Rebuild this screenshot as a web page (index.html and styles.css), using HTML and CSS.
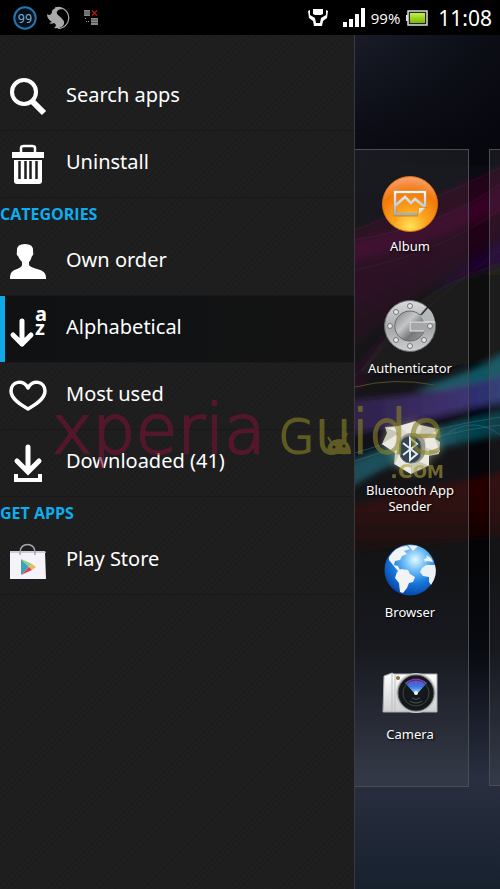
FILE: index.html
```html
<!DOCTYPE html>
<html lang="en">
<head>
  <meta charset="UTF-8">
  <meta name="viewport" content="width=device-width, initial-scale=1.0">
  <title>App drawer</title>
  <link rel="stylesheet" href="styles.css">
</head>
<body>
  <header class="status-bar">
    <div class="status-left">
      <svg width="24" height="24" viewBox="0 0 24 24">
        <circle cx="12" cy="12" r="10.700" fill="#05101a" stroke="#2474b0" stroke-width="2"/>
        <text class="badge-number" x="12" y="17" text-anchor="middle">99</text>
      </svg>
      <svg width="24" height="24" viewBox="0 0 24 24">
        <path d="M9 2A10.500 10.500 0 1 1 12 22.500" fill="none" stroke="#aaa" stroke-width="1.200"/>
        <path d="M1 8C3 10 6 9 6 5C8 1.500 13 .500 17 3C12 3 9 6 12 9C15 12 19 14 18 18C17 21 13 23 8 22C11 20 10 18 8 17C6 18 5 18 3 17L6 16C3 14 1 12 1 8Z" fill="#aaa"/>
      </svg>
      <svg width="24" height="24" viewBox="0 0 24 24">
        <path d="M5 4h6v6H5zM12 12h7v7h-7z" fill="#888"/>
        <path d="M5 6h6M5 8h6M12 14h7M12 16.500h7" stroke="#333" stroke-width=".6"/>
        <path d="M13 4.500l5 5M18 4.500l-5 5" stroke="#c01010" stroke-width="1.300"/>
        <path d="M6 12h1v1H6zM7 15h1v1H7zM9 15h1v1H9z" fill="#aaa"/>
      </svg>
    </div>
    <div class="status-right">
      <svg class="debug" width="20" height="18" viewBox="0 0 20 18">
        <path d="M5 0h10v5l-2 1H7L5 5z" fill="#fff"/>
        <path d="M0 2l2-1v5l5 3 1 5h4l1-5 5-3V1l2 1-1 7-4 3-1 5H6l-1-5-4-3z" fill="#fff"/>
      </svg>
      <svg class="signal" width="22" height="19" viewBox="0 0 22 19">
        <path d="M0 14h4v5H0zM6 11h4v8H6zM12 6h4v13h-4zM18 0h4v19h-4z" fill="#fff"/>
      </svg>
      <span class="percent">99%</span>
      <svg class="battery" width="22" height="16" viewBox="0 0 22 16">
        <defs>
          <linearGradient id="charge" x2="0" y2="1">
            <stop stop-color="#c5ef48"/><stop offset="1" stop-color="#77b900"/>
          </linearGradient>
        </defs>
        <rect x="2" y="1" width="19" height="14" fill="#222" stroke="#ddd" stroke-width="1.500"/>
        <path d="M0 5h2v6H0z" fill="#ddd"/>
        <rect x="4" y="3" width="15" height="10" fill="url(#charge)"/>
      </svg>
      <time class="clock">11:08</time>
    </div>
  </header>

  <main class="screen">
    <nav class="drawer">
      <button class="item">
        <svg width="38" height="38" viewBox="0 0 38 38">
          <circle cx="15" cy="14" r="12" fill="none" stroke="#fff" stroke-width="4"/>
          <path d="M23 23l12 12" stroke="#fff" stroke-width="6"/>
        </svg>
        <span>Search apps</span>
      </button>
      <button class="item">
        <svg width="38" height="40" viewBox="0 0 38 40">
          <path d="M12 8V4q0-2 3-2h8q3 0 3 2v4" fill="none" stroke="#fff" stroke-width="2.500"/>
          <path d="M3 8h32v6H3z" fill="#fff"/>
          <path d="M5 16h28v21q0 3-3 3H8q-3 0-3-3z" fill="#fff"/>
          <path d="M10.500 17v18M16.500 17v18M21.500 17v18M27.500 17v18" stroke="#1e1e1e" stroke-width="2.500"/>
        </svg>
        <span>Uninstall</span>
      </button>

      <h2 class="group">CATEGORIES</h2>
      <button class="item">
        <svg width="38" height="38" viewBox="0 0 38 38">
          <path d="M1 36V34Q1 28 8 26Q13 24 13 22V19Q10 16 9 13Q7 12 8 9Q7 1 16 1Q25 1 24 9Q25 12 23 13Q22 17 20 19V22Q21 24 28 26Q37 28 37 34V36Z" fill="#fff"/>
        </svg>
        <span>Own order</span>
      </button>
      <button class="item selected">
        <svg width="38" height="38" viewBox="0 0 38 38">
          <path d="M13 11v23M4 25l9 9 9-9" fill="none" stroke="#fff" stroke-width="5" stroke-linecap="round" stroke-linejoin="round"/>
          <text class="az" x="26" y="11">a</text>
          <text class="az" x="26" y="25">z</text>
        </svg>
        <span>Alphabetical</span>
      </button>
      <button class="item">
        <svg width="38" height="38" viewBox="0 0 38 38">
          <path d="M19 11C15 2 2 4 2 14C2 22 12 28 19 32C26 28 36 22 36 14C36 4 23 2 19 11Z" fill="none" stroke="#fff" stroke-width="3.500" stroke-linejoin="round"/>
        </svg>
        <span>Most used</span>
      </button>
      <button class="item">
        <svg width="38" height="40" viewBox="0 0 38 40">
          <path d="M19 4v23M8 18l11 11 11-11" fill="none" stroke="#fff" stroke-width="5" stroke-linecap="round"/>
          <path d="M7 31v6h24v-6" fill="none" stroke="#fff" stroke-width="4"/>
        </svg>
        <span>Downloaded (41)</span>
      </button>

      <h2 class="group">GET APPS</h2>
      <button class="item">
        <svg width="38" height="38" viewBox="0 0 38 38">
          <path d="M1 10h35l1 27H1z" fill="#f5f4fa"/>
          <path d="M1 9h35l1 2H1z" fill="#cfcdd6"/>
          <path d="M11 13V10C11 0 26 0 26 10v3" fill="none" stroke="#a5a5ad" stroke-width="1.500"/>
          <path d="M12 17v16l8-8z" fill="#3ba2bd"/>
          <path d="M12 17l8 8 3-3z" fill="#93c886"/>
          <path d="M23 22l-3 3 3 3 4-3z" fill="#f2b755"/>
          <path d="M12 33l8-8 3 3z" fill="#de4058"/>
        </svg>
        <span>Play Store</span>
      </button>
    </nav>

    <section class="home">
      <svg class="wallpaper" viewBox="0 0 146 854" preserveAspectRatio="none">
        <defs>
          <linearGradient id="sky" x2="0" y2="1">
            <stop stop-color="#191c28"/><stop offset=".12" stop-color="#0b0c14"/>
            <stop offset=".3" stop-color="#06060b"/><stop offset=".62" stop-color="#040407"/>
            <stop offset=".72" stop-color="#080a11"/><stop offset=".87" stop-color="#292f40"/>
            <stop offset="1" stop-color="#17212e"/>
          </linearGradient>
          <linearGradient id="shade" x2="1" y2="0">
            <stop stop-color="#05060c" stop-opacity="0"/><stop offset="1" stop-color="#05060c" stop-opacity=".7"/>
          </linearGradient>
          <linearGradient id="pink" x1=".3" y1="0" x2=".7" y2="1">
            <stop offset=".15" stop-color="#33041f" stop-opacity=".6"/><stop offset=".5" stop-color="#26041a" stop-opacity=".8"/><stop offset=".9" stop-color="#1b0413" stop-opacity=".2"/>
          </linearGradient>
          <linearGradient id="purple" x1="0" y1="1" x2="1" y2="0">
            <stop stop-color="#200616"/><stop offset=".5" stop-color="#1c0724"/><stop offset="1" stop-color="#1d0333"/>
          </linearGradient>
          <linearGradient id="olive" x2="0" y2="1">
            <stop stop-color="#13130a"/><stop offset="1" stop-color="#060607"/>
          </linearGradient>
          <linearGradient id="violet" x2="1" y2="0">
            <stop stop-color="#22133c"/><stop offset=".6" stop-color="#33236a"/><stop offset="1" stop-color="#293b7a"/>
          </linearGradient>
          <linearGradient id="teal" x2="1" y2="0">
            <stop stop-color="#0f4654"/><stop offset=".6" stop-color="#07505c"/><stop offset="1" stop-color="#05303c"/>
          </linearGradient>
          <linearGradient id="red" x2="0" y2="1">
            <stop stop-color="#2c0004"/><stop offset=".5" stop-color="#200204"/><stop offset="1" stop-color="#0b0204"/>
          </linearGradient>
          <filter id="soft" x="-10%" y="-10%" width="120%" height="120%">
            <feGaussianBlur stdDeviation="3"/>
          </filter>
        </defs>
        <rect width="146" height="854" fill="url(#sky)"/>
        <rect width="146" height="130" fill="url(#shade)"/>
        <g filter="url(#soft)">
          <path d="M-10 200Q80 160 156 128V205Q80 240 -10 320Z" fill="url(#pink)"/>
          <path d="M-10 208Q90 190 156 145V172Q80 208 -10 228Z" fill="#4c0630" opacity=".5"/>
          <path d="M-10 345Q66 255 156 200V232Q90 280 -10 365Z" fill="url(#purple)"/>
          <path d="M60 270Q100 240 156 228V320Q90 335 0 345Z" fill="url(#olive)"/>
          <path d="M80 348Q120 336 156 316V345Q110 355 60 356Z" fill="#0c5763"/>
          <path d="M-10 365Q90 360 156 338V366Q60 380 -10 418Z" fill="url(#violet)"/>
          <path d="M-10 400Q60 385 156 367V382Q80 395 -10 430Z" fill="#06060b"/>
          <path d="M-10 430Q90 390 156 374V400Q60 410 -10 456Z" fill="url(#teal)"/>
          <path d="M-10 472Q80 450 156 436V500Q80 508 -10 518Z" fill="url(#red)"/>
        </g>
        <path d="M0 352Q40 342 80 350" fill="none" stroke="#4d4420"/>
        <path d="M0 418Q80 392 146 382M0 426Q80 398 146 390M90 400Q120 380 146 400" fill="none" stroke="#22818c" opacity=".5"/>
        <path d="M0 205Q90 190 146 149M0 235Q90 216 146 174M0 341Q70 270 146 215M0 195Q80 165 146 133" fill="none" stroke="#63214b" opacity=".25"/>
      </svg>

      <div class="page">
        <button class="app">
          <svg width="56" height="56" viewBox="0 0 56 56">
            <defs>
              <radialGradient id="orange" cx=".5" cy=".9" r=".85">
                <stop stop-color="#ffe258"/><stop offset=".35" stop-color="#fba51e"/><stop offset=".75" stop-color="#f47808"/><stop offset="1" stop-color="#f69b63"/>
              </radialGradient>
              <linearGradient id="silver" x2="0" y2="1">
                <stop stop-color="#f4f8fa"/><stop offset="1" stop-color="#a2b0b8"/>
              </linearGradient>
            </defs>
            <circle cx="28" cy="28" r="27.500" fill="url(#orange)" stroke="#dc730c"/>
            <path d="M36 39H13V16h30v16" fill="none" stroke="#9c4600" stroke-width="3" opacity=".4"/>
            <path d="M35 38H13V16h30v15M13 30l10-9 6 6 4-4 10 8" fill="none" stroke="url(#silver)" stroke-width="2.500"/>
            <path d="M37 32h6l-6 6z" fill="#d8e2e6"/>
          </svg>
          <span>Album</span>
        </button>
        <button class="app">
          <svg width="56" height="56" viewBox="0 0 56 56">
            <defs>
              <linearGradient id="steel" x2="1" y2="1">
                <stop stop-color="#77797b"/><stop offset=".4" stop-color="#c4c6c7"/><stop offset=".65" stop-color="#75787a"/><stop offset="1" stop-color="#a5a6a7"/>
              </linearGradient>
              <linearGradient id="metal" x2="0" y2="1">
                <stop stop-color="#d9dadb"/><stop offset=".55" stop-color="#a4a7a9"/><stop offset="1" stop-color="#cecfd0"/>
              </linearGradient>
            </defs>
            <circle cx="28" cy="28" r="16" fill="url(#steel)"/>
            <path d="M45 9A25.500 25.500 0 1 0 53.500 28V24H28V33H42A15 15 0 1 1 38 17Z" fill="url(#metal)" stroke="#66696b"/>
            <path d="M28 24h25v9H28z" fill="#a5a8aa"/>
            <path d="M39 18l7-8q6 5 7 14H42z" fill="#b5b8ba"/>
            <path d="M28 33V24h25M28 33h14" fill="none" stroke="#efefef"/>
            <g fill="#e4e5e6" stroke="#777" stroke-width="1">
              <circle cx="28" cy="8" r="2.500"/><circle cx="14" cy="14" r="2.500"/><circle cx="8" cy="28" r="2.500"/><circle cx="14" cy="42" r="2.500"/><circle cx="28" cy="48" r="2.500"/><circle cx="42" cy="42" r="2.500"/><circle cx="48" cy="28" r="2.500"/>
            </g>
          </svg>
          <span>Authenticator</span>
        </button>
        <button class="app">
          <svg class="package" width="60" height="56" viewBox="0 0 60 56">
            <path d="M7 13L5 7l14-1L35 1l6 4 17 4-4 9 6 4-1 12-11 2v10L31 54 14 44l1-11L2 24z" fill="#c9c7b6"/>
            <path d="M7 8l22 9L34 2l-15 4zM2 24l14-9 9 6-9 12zM31 54l-16-10 4-10 12 4zM45 19l14-10-4 10 5 13-14-4zM36 40l13-11v17z" fill="#eceae0"/>
            <path d="M19 6l12 10 4-14 7 5-5 14-20 3z" fill="#dddbcf"/>
            <rect x="19" y="13" width="26" height="30" rx="12" fill="#999985"/>
            <rect x="20" y="16" width="21" height="27" rx="10" fill="#314454" stroke="#657375"/>
            <path d="M23 23l14 11-7 6V18l7 6-14 11" fill="none" stroke="#e6eced" stroke-width="2"/>
          </svg>
          <span>Bluetooth App Sender</span>
        </button>
        <button class="app">
          <svg width="56" height="56" viewBox="0 0 56 56">
            <defs>
              <radialGradient id="sea" cx=".6" cy=".3" r=".7">
                <stop stop-color="#e3fbff"/><stop offset=".3" stop-color="#72bff8"/><stop offset=".65" stop-color="#1879dc"/><stop offset="1" stop-color="#0749ad"/>
              </radialGradient>
            </defs>
            <circle cx="28" cy="28" r="25.500" fill="url(#sea)"/>
            <path d="M7 15Q14 4 25 4l3 3-6 2 3 3-5 2-2 4-5 1-1 4 4 1 2 4 4 1-1 2-5-2-5-6-4-5z" fill="#f2f3f4"/>
            <path d="M15 30l4-3 7 1 2 4 5 3-2 5-4 1-2 5-4 5-3-1-1-9-4-5z" fill="#f2f3f4"/>
            <path d="M53 23l-9 0-4 3-2 4 3 4 6 1v5l2 3Q56 33 53 23zM26 3l10 1-5 5zM44 13l5 3 2 4-6-1-2 1-1-3 3-1z" fill="#edf1f4"/>
          </svg>
          <span>Browser</span>
        </button>
        <button class="app">
          <svg width="56" height="56" viewBox="0 0 56 56">
            <defs>
              <linearGradient id="case" x2="0" y2="1">
                <stop stop-color="#fff"/><stop offset="1" stop-color="#cfd0d2"/>
              </linearGradient>
              <linearGradient id="glass" x2="0" y2="1">
                <stop stop-color="#8c2fc4"/><stop offset=".5" stop-color="#317ce0"/><stop offset="1" stop-color="#bfe6fc"/>
              </linearGradient>
            </defs>
            <path d="M2 12l8-3 2 1h43v38H1z" fill="url(#case)" stroke="#aaa"/>
            <path d="M10 10v38M13 11v37" stroke="#bcbdc0" stroke-width="1"/>
            <circle cx="16" cy="14" r="2" fill="#8c7337"/>
            <circle cx="34" cy="29" r="20" fill="#c7c8c9"/>
            <circle cx="34" cy="29" r="18" fill="#15181b" stroke="#666" stroke-width="1"/>
            <path d="M23 19Q34 10 45 19L34 31z" fill="url(#glass)"/>
            <circle cx="34" cy="29" r="13" fill="none" stroke="#3b4248"/>
            <path d="M30 34q4 3 8 0M28 37q6 4 12 0" fill="none" stroke="#42565c"/>
            <circle cx="34" cy="29" r="2" fill="#e5f6fb"/>
          </svg>
          <span>Camera</span>
        </button>
      </div>
      <div class="page next"></div>
    </section>

    <div class="watermark">
      <div class="brand">
        <span class="brand-first">xperia</span>
        <span class="brand-second"><span class="brand-cap">G</span>uide</span>
      </div>
      <div class="domain">.C<small>OM</small></div>
      <svg class="robot" width="26" height="26" viewBox="0 0 26 26">
        <path d="M1 24Q0 10 13 9Q25 10 25 24Z" fill="#8a8424"/>
        <path d="M5 12L2 7M18 10l3-7" stroke="#8a8424" stroke-width="2"/>
        <circle cx="8" cy="17" r="1.500" fill="#1e1e1e"/><circle cx="18" cy="16" r="1.500" fill="#1e1e1e"/>
      </svg>
    </div>
  </main>
</body>
</html>
```
FILE: styles.css
```css
* {
  box-sizing: border-box;
}

body {
  margin: 0;
  min-height: 100vh;
  display: flex;
  flex-direction: column;
  background: #000;
  color: #fff;
  font-family: 'Noto Sans', 'Open Sans', sans-serif;
}

button {
  border: none;
  background: none;
  color: inherit;
  font-family: inherit;
  cursor: pointer;
}

/* Status bar */
.status-bar {
  height: 35px;
  padding: 0 8px 0 13px;
  display: flex;
  justify-content: space-between;
  align-items: center;
}

.status-left,
.status-right {
  display: flex;
  align-items: center;
}

.status-left {
  gap: 9px;
}

.status-right {
  gap: 6px;
}

.badge-number {
  fill: #7badd0;
  font-family: 'Roboto', sans-serif;
  font-size: 13px;
}

.debug {
  margin-right: 9px;
}

.percent {
  font-family: 'Open Sans', sans-serif;
  font-size: 15px;
}

.clock {
  margin-left: 4px;
  font-size: 21px;
}

/* Drawer */
.screen {
  position: relative;
  flex: 1;
  display: flex;
}

.drawer {
  width: 71%;
  padding-top: 29px;
  background: repeating-linear-gradient(135deg, #1d1d1d 0, #1d1d1d 2px, #1f1f1f 2px, #1f1f1f 4px);
  border-right: 1px solid #3a3a3a;
}

.item {
  width: 100%;
  height: 67px;
  padding: 0 9px;
  display: flex;
  align-items: center;
  gap: 19px;
  border-bottom: 1px solid #191919;
  font-size: 20px;
  text-align: left;
}

.item svg {
  width: 38px;
  flex: none;
  overflow: visible;
}

.item span {
  padding-bottom: 6px;
}

.item.selected {
  background: linear-gradient(90deg, #0f1113, #131313);
  box-shadow: inset 5px 0 #0fa9e8;
}

.az {
  fill: #fff;
  font-size: 20px;
  font-weight: bold;
}

.group {
  margin: 0;
  height: 31px;
  color: #0caeef;
  font-family: 'Open Sans', sans-serif;
  font-size: 16px;
  line-height: 32px;
}

/* Home screen */
.home {
  position: relative;
  flex: 1;
  min-width: 0;
  padding-top: 114px;
  display: flex;
  align-items: flex-start;
  gap: 20px;
  overflow: hidden;
}

.wallpaper {
  position: absolute;
  top: 0;
  left: 0;
  width: 100%;
  height: 100%;
}

.page {
  position: relative;
  width: calc(100% - 31px);
  min-height: 637px;
  padding: 26px 3px 0 0;
  background: rgba(120, 120, 120, 0.14);
  border: 1px solid #4b4d52;
  border-left: none;
}

.page.next {
  flex: 1;
  padding: 0;
  border-left: 1px solid #4b4d52;
  border-right: none;
}

.app {
  width: 100%;
  height: 122px;
  padding: 0;
  display: flex;
  flex-direction: column;
  align-items: center;
  gap: 6px;
  font-size: 13px;
  line-height: 16px;
  text-shadow: 1px 1px 2px #000;
}

.app svg {
  flex: none;
}

.package {
  filter: drop-shadow(0 0 4px rgba(210, 205, 160, 0.5));
}

/* Site mark over the screen */
.watermark {
  position: absolute;
  top: 371px;
  left: 52px;
  width: 392px;
  opacity: 0.6;
  pointer-events: none;
  font-family: 'DejaVu Sans', sans-serif;
  font-weight: 200;
}

.brand {
  display: flex;
  align-items: baseline;
  justify-content: space-between;
  line-height: 48px;
}

.brand-first {
  color: #7a1234;
  font-size: 68px;
  -webkit-text-stroke: 2px #7a1234;
}

.brand-second {
  color: #8a8424;
  font-size: 60px;
  -webkit-text-stroke: 2px #8a8424;
}

.brand-cap {
  font-size: 46px;
}

.domain {
  color: #a89e35;
  font-size: 20px;
  font-weight: bold;
  line-height: 20px;
  text-align: right;
}

.domain small {
  font-size: 17px;
}

.robot {
  position: absolute;
  top: 24px;
  left: 274px;
}
```
